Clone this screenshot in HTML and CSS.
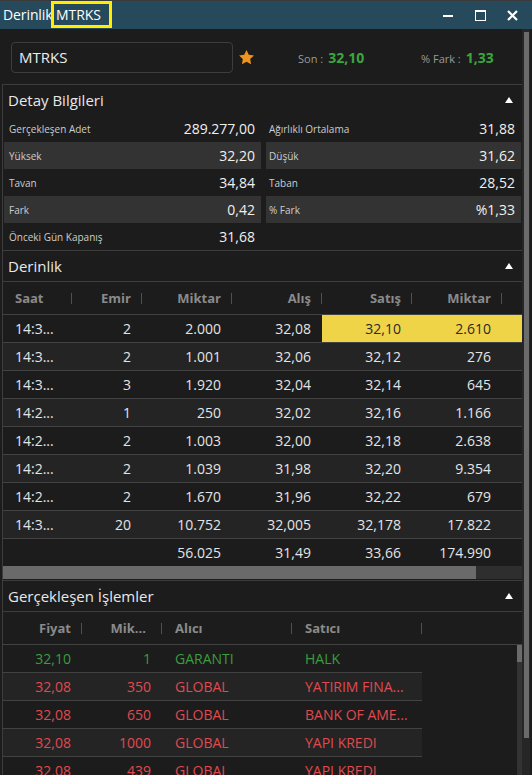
FILE: index.html
```html
<!DOCTYPE html>
<html lang="tr">
<head>
    <meta charset="UTF-8">
    <meta name="viewport" content="width=device-width, initial-scale=1.0">
    <title>Derinlik MTRKS</title>
    <link rel="stylesheet" href="styles.css">
</head>
<body>
    <div class="window">
        <div class="titlebar">
            <div class="title">Derinlik <span class="hl">MTRKS</span></div>
            <div class="win-buttons">
                <span class="win-btn"><span class="icon-min"></span></span>
                <span class="win-btn"><span class="icon-max"></span></span>
                <span class="win-btn">
                    <svg width="11" height="11" viewBox="0 0 11 11"><path d="M1 1L10 10M10 1L1 10" stroke="#fff" stroke-width="2.2"/></svg>
                </span>
            </div>
        </div>

        <div class="main">
            <div class="content">
                <div class="symbol-row">
                    <div class="symbol-input">MTRKS</div>
                    <svg class="star" width="17" height="17" viewBox="0 0 24 24"><path d="M12 1.5l3.2 6.6 7.3 1-5.3 5.1 1.3 7.2L12 18l-6.5 3.4 1.3-7.2L1.5 9.1l7.3-1z" fill="#ee951f"/></svg>
                    <div class="quote quote-son"><span class="q-label">Son :</span><span class="q-val">32,10</span></div>
                    <div class="quote"><span class="q-label">% Fark :</span><span class="q-val">1,33</span></div>
                </div>

                <!-- Detay -->
                <div class="section">
                    <div class="section-head"><span>Detay Bilgileri</span><i class="caret"></i></div>
                    <div class="detail-grid">
                        <div class="d-row"><span class="d-label">Gerçekleşen Adet</span><span class="d-val">289.277,00</span></div>
                        <div class="d-row"><span class="d-label">Ağırlıklı Ortalama</span><span class="d-val">31,88</span></div>
                        <div class="d-row alt"><span class="d-label">Yüksek</span><span class="d-val">32,20</span></div>
                        <div class="d-row alt"><span class="d-label">Düşük</span><span class="d-val">31,62</span></div>
                        <div class="d-row"><span class="d-label">Tavan</span><span class="d-val">34,84</span></div>
                        <div class="d-row"><span class="d-label">Taban</span><span class="d-val">28,52</span></div>
                        <div class="d-row alt"><span class="d-label">Fark</span><span class="d-val">0,42</span></div>
                        <div class="d-row alt"><span class="d-label">% Fark</span><span class="d-val">%1,33</span></div>
                        <div class="d-row"><span class="d-label">Önceki Gün Kapanış</span><span class="d-val">31,68</span></div>
                        <div class="d-row"></div>
                    </div>
                </div>

                <!-- Derinlik -->
                <div class="section">
                    <div class="section-head lined"><span>Derinlik</span><i class="caret"></i></div>
                    <div class="dt-row dt-head">
                        <span class="c first sep">Saat</span><span class="c sep">Emir</span><span class="c sep">Miktar</span><span class="c sep">Alış</span><span class="c sep">Satış</span><span class="c sep">Miktar</span><span class="c"></span>
                    </div>
                    <div class="dt-row">
                        <span class="c first">14:3...</span><span class="c">2</span><span class="c">2.000</span><span class="c">32,08</span><span class="c best">32,10</span><span class="c best">2.610</span><span class="c best"></span>
                    </div>
                    <div class="dt-row alt">
                        <span class="c first">14:3...</span><span class="c">2</span><span class="c">1.001</span><span class="c">32,06</span><span class="c">32,12</span><span class="c">276</span><span class="c"></span>
                    </div>
                    <div class="dt-row">
                        <span class="c first">14:3...</span><span class="c">3</span><span class="c">1.920</span><span class="c">32,04</span><span class="c">32,14</span><span class="c">645</span><span class="c"></span>
                    </div>
                    <div class="dt-row alt">
                        <span class="c first">14:2...</span><span class="c">1</span><span class="c">250</span><span class="c">32,02</span><span class="c">32,16</span><span class="c">1.166</span><span class="c"></span>
                    </div>
                    <div class="dt-row">
                        <span class="c first">14:2...</span><span class="c">2</span><span class="c">1.003</span><span class="c">32,00</span><span class="c">32,18</span><span class="c">2.638</span><span class="c"></span>
                    </div>
                    <div class="dt-row alt">
                        <span class="c first">14:2...</span><span class="c">2</span><span class="c">1.039</span><span class="c">31,98</span><span class="c">32,20</span><span class="c">9.354</span><span class="c"></span>
                    </div>
                    <div class="dt-row">
                        <span class="c first">14:2...</span><span class="c">2</span><span class="c">1.670</span><span class="c">31,96</span><span class="c">32,22</span><span class="c">679</span><span class="c"></span>
                    </div>
                    <div class="dt-row alt">
                        <span class="c first">14:3...</span><span class="c">20</span><span class="c">10.752</span><span class="c">32,005</span><span class="c">32,178</span><span class="c">17.822</span><span class="c"></span>
                    </div>
                    <div class="dt-row total">
                        <span class="c first"></span><span class="c"></span><span class="c">56.025</span><span class="c">31,49</span><span class="c">33,66</span><span class="c">174.990</span><span class="c"></span>
                    </div>
                    <div class="hscroll"><div class="hthumb"></div></div>
                </div>

                <!-- Gerçekleşen İşlemler -->
                <div class="section trades">
                    <div class="section-head lined"><span>Gerçekleşen İşlemler</span><i class="caret"></i></div>
                    <div class="tr-row tr-head">
                        <span class="c sep">Fiyat</span><span class="c sep short">Mik...</span><span class="c left sep">Alıcı</span><span class="c left sep">Satıcı</span><span class="c"></span>
                    </div>
                    <div class="tr-body">
                        <div class="tr-rows">
                            <div class="tr-row up">
                                <span class="c">32,10</span><span class="c">1</span><span class="c left">GARANTI</span><span class="c left">HALK</span>
                            </div>
                            <div class="tr-row down alt">
                                <span class="c">32,08</span><span class="c">350</span><span class="c left">GLOBAL</span><span class="c left">YATIRIM FINA...</span>
                            </div>
                            <div class="tr-row down">
                                <span class="c">32,08</span><span class="c">650</span><span class="c left">GLOBAL</span><span class="c left">BANK OF AME...</span>
                            </div>
                            <div class="tr-row down alt">
                                <span class="c">32,08</span><span class="c">1000</span><span class="c left">GLOBAL</span><span class="c left">YAPI KREDI</span>
                            </div>
                            <div class="tr-row down">
                                <span class="c">32,08</span><span class="c">439</span><span class="c left">GLOBAL</span><span class="c left">YAPI KREDI</span>
                            </div>
                        </div>
                        <div class="inner-scroll"><div class="inner-thumb"></div></div>
                    </div>
                </div>
            </div>

            <div class="vscroll"><div class="vthumb"></div></div>
        </div>
    </div>
</body>
</html>
```

FILE: styles.css
```css
:root {
    --bg: #1c1c1c;
    --line: #424242;
    --alt-row: #242424;
    --head-text: #8a8a8a;
    --text: #e4e4e4;
    --green: #3da53f;
    --trade-green: #3b9d3e;
    --red: #e04a4f;
    --best: #f0d447;
}

* {
    box-sizing: border-box;
    margin: 0;
    padding: 0;
}

body {
    background: var(--bg);
    font-family: "Open Sans", "DejaVu Sans", sans-serif;
    color: var(--text);
}

.window {
    width: 532px;
    height: 775px;
    overflow: hidden;
    display: flex;
    flex-direction: column;
}

/* title bar */
.titlebar {
    flex: none;
    height: 29px;
    border-top: 1px solid #3a3a3a;
    background: #264a5c;
    display: flex;
    align-items: center;
    justify-content: space-between;
}

.title {
    font-size: 14px;
    line-height: 20px;
    color: #fff;
    padding-left: 3px;
    letter-spacing: -0.1px;
}

.title .hl {
    outline: 3px solid #ffee00;
    padding: 1px 8px 1px 2px;
    margin-left: -2px;
}

.win-buttons {
    display: flex;
    padding-right: 4px;
}

.win-btn {
    width: 32px;
    height: 28px;
    display: flex;
    align-items: center;
    justify-content: center;
}

.icon-min {
    width: 10px;
    height: 2px;
    background: #fff;
    margin-top: 2px;
}

.icon-max {
    width: 11px;
    height: 11px;
    border: 1.5px solid #fff;
    border-top-width: 2.5px;
}

/* body */
.main {
    flex: 1;
    min-height: 0;
    display: flex;
}

.content {
    width: 522px;
    display: flex;
    flex-direction: column;
    min-height: 0;
}

.vscroll {
    width: 8px;
    background: #262626;
    padding: 3px 1px 0 2px;
}

.vthumb {
    height: 706px;
    background: #6b6b6b;
}

.symbol-row {
    flex: none;
    height: 55px;
    padding: 2px 0 0 11px;
    display: flex;
    align-items: center;
}

.symbol-input {
    width: 222px;
    height: 31px;
    border: 1px solid #3d3d3d;
    border-radius: 4px;
    padding-left: 7px;
    font-size: 15px;
    line-height: 29px;
    color: #ececec;
}

.star {
    margin-left: 5px;
}

.quote {
    display: flex;
    align-items: baseline;
    gap: 5px;
}

.quote-son {
    width: 123px;
    margin-left: 43px;
}

.q-label {
    font-size: 11px;
    color: #9a9a9a;
}

.q-val {
    font-size: 14px;
    font-weight: bold;
    color: var(--green);
}

/* sections */
.section {
    flex: none;
    margin-left: 2px;
    border-left: 1px solid #3d3d3d;
    border-top: 1px solid #3d3d3d;
}

.section-head {
    flex: none;
    height: 30px;
    padding: 0 9px 0 5px;
    display: flex;
    align-items: center;
    justify-content: space-between;
    font-size: 15px;
    color: #e8e8e8;
}

.section-head.lined {
    height: 31px;
    border-bottom: 1px solid #3d3d3d;
}

.caret {
    width: 0;
    height: 0;
    border-left: 4px solid transparent;
    border-right: 4px solid transparent;
    border-bottom: 6px solid #fff;
}

.detail-grid {
    display: grid;
    grid-template-columns: 257px 255px;
    column-gap: 5px;
    padding-left: 1px;
}

.d-row {
    height: 27px;
    padding: 0 6px 0 5px;
    display: flex;
    align-items: center;
    justify-content: space-between;
}

.d-row:nth-child(even) {
    padding-left: 3px;
}

.d-row.alt {
    background: #333;
}

.d-label {
    font-size: 10px;
    color: #cdcdcd;
}

.d-val {
    font-size: 14px;
    color: #f0f0f0;
}

/* depth table */
.dt-row {
    display: grid;
    grid-template-columns: 69px 70px 90px 90px 90px 90px 20px;
    height: 28px;
    border-bottom: 1px solid var(--line);
    font-size: 14px;
    line-height: 27px;
}

.dt-row.alt {
    background: var(--alt-row);
}

.dt-row.total {
    height: 27px;
    border-bottom: none;
}

.c {
    position: relative;
    padding-right: 11px;
    text-align: right;
    white-space: nowrap;
    overflow: hidden;
}

.c.first {
    padding: 0 0 0 12px;
    text-align: left;
}

.c.best {
    background: var(--best);
    color: #2a2a2a;
}

.sep::after {
    content: "";
    position: absolute;
    right: 0;
    top: 11px;
    width: 1px;
    height: 11px;
    background: #505050;
}

.hscroll {
    height: 13px;
    margin-bottom: 1px;
    background: #2e2e2e;
}

.hthumb {
    width: 473px;
    height: 100%;
    background: #6a6a6a;
}

/* trades table */
.section.trades {
    flex: 1 1 0;
    min-height: 0;
    display: flex;
    flex-direction: column;
}

.tr-row {
    display: grid;
    grid-template-columns: 79px 80px 130px 130px;
    height: 28px;
    border-bottom: 1px solid var(--line);
    font-size: 14px;
    line-height: 27px;
}

.tr-row.alt {
    background: var(--alt-row);
}

.c.left {
    padding: 0 0 0 13px;
    text-align: left;
}

.tr-row.up {
    color: var(--trade-green);
}

.tr-row.down {
    color: var(--red);
}

/* header rows of both tables */
.dt-row.dt-head,
.tr-row.tr-head {
    height: 33px;
    line-height: 32px;
    font-size: 13px;
    font-weight: bold;
    color: var(--head-text);
}

.tr-row.tr-head {
    grid-template-columns: 79px 80px 130px 130px 1fr;
    flex: none;
}

.tr-head .short {
    padding-right: 16px;
}

.tr-body {
    flex: 1 1 0;
    min-height: 0;
    display: flex;
    overflow: hidden;
}

.tr-rows {
    width: 419px;
    flex: none;
}

.inner-scroll {
    width: 5px;
    margin-left: auto;
    background: #333;
}

.inner-thumb {
    height: 17px;
    background: #6b6b6b;
}
```
